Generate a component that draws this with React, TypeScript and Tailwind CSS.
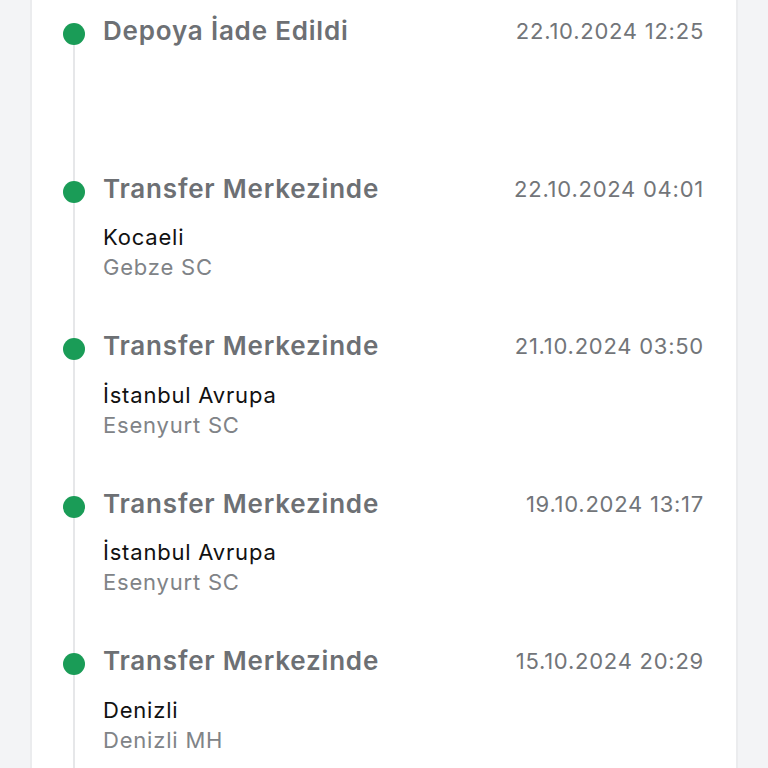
const events = [
  { title: "Depoya İade Edildi", date: "22.10.2024 12:25" },
  { title: "Transfer Merkezinde", date: "22.10.2024 04:01", city: "Kocaeli", hub: "Gebze SC" },
  { title: "Transfer Merkezinde", date: "21.10.2024 03:50", city: "İstanbul Avrupa", hub: "Esenyurt SC" },
  { title: "Transfer Merkezinde", date: "19.10.2024 13:17", city: "İstanbul Avrupa", hub: "Esenyurt SC" },
  { title: "Transfer Merkezinde", date: "15.10.2024 20:29", city: "Denizli", hub: "Denizli MH" },
];

type Event = (typeof events)[number];

function TimelineItem({ ev, first }: { ev: Event; first: boolean }) {
  return (
    <div className="flex gap-[18px] h-[157.5px]">
      <div className="relative w-[22px] flex flex-col items-center">
        <div
          className={
            first
              ? "absolute left-[10px] top-[19px] bottom-0 w-[2px] bg-[#e6e7e9]"
              : "absolute left-[10px] top-0 bottom-0 w-[2px] bg-[#e6e7e9]"
          }
        />
        <div className="relative mt-[8px] w-[22px] h-[22px] rounded-full bg-[#1a9c57]" />
      </div>
      <div className="flex-1 flex flex-col">
        <div className="flex justify-between items-center">
          <span className="text-[26px] leading-[32px] font-semibold tracking-[0.8px] text-[#6d7074]">{ev.title}</span>
          <span className="text-[22px] leading-[32px] tracking-[0.75px] text-[#727579]">{ev.date}</span>
        </div>
        {ev.city && (
          <div className="mt-[17.5px] text-[22px] leading-[30px] tracking-[0.8px]">
            <div className="text-[#111111]">{ev.city}</div>
            <div className="text-[#808387]">{ev.hub}</div>
          </div>
        )}
      </div>
    </div>
  );
}

export default function App() {
  return (
    <div
      className="min-h-screen h-[768px] overflow-hidden bg-[#f3f4f6] px-[30px]"
      style={{ fontFamily: "Inter, 'Noto Sans', sans-serif" }}
    >
      <div className="h-full bg-white border-x-2 border-[#ebecee] pl-[31px] pr-[32px] pt-[15px]">
        {events.map((ev, i) => (
          <TimelineItem key={i} ev={ev} first={i === 0} />
        ))}
      </div>
    </div>
  );
}
